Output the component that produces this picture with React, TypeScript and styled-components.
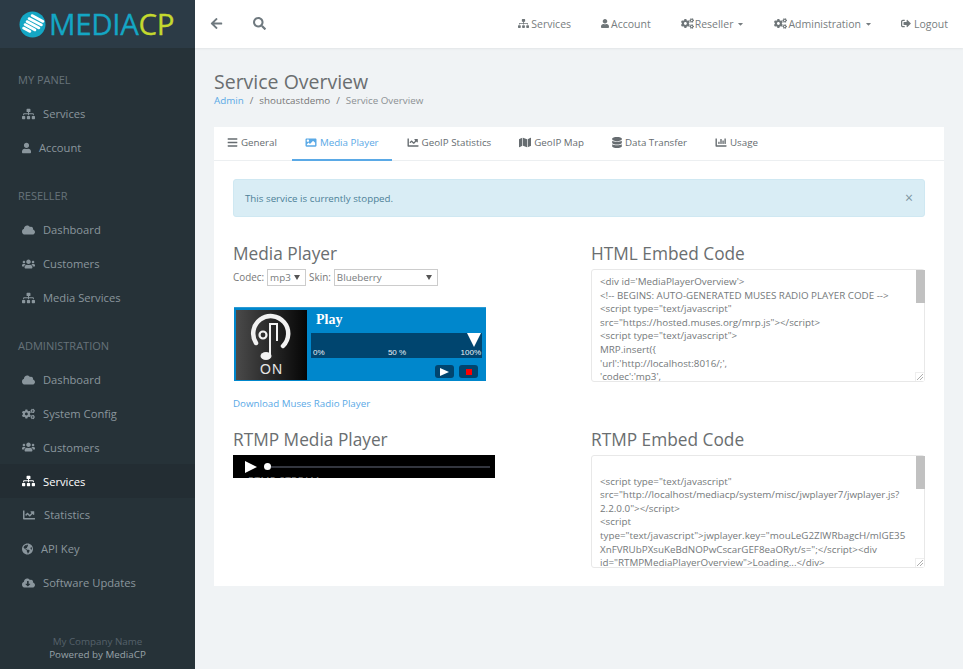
import React from "react";
import styled, { createGlobalStyle } from "styled-components";
import {
  FaSitemap, FaUser, FaCogs, FaSignOutAlt, FaCloud, FaUsers, FaChartLine, FaGlobeAmericas,
  FaCloudDownloadAlt, FaBars, FaImage, FaMap, FaDatabase, FaChartBar, FaArrowLeft, FaSearch, FaCaretDown,
} from "react-icons/fa";

const Global = createGlobalStyle`
  html, body { margin: 0; padding: 0; height: 100%; background: #f0f3f5; overflow: hidden; }
  body { font-family: "Open Sans", "Liberation Sans", sans-serif; font-size: 11px; color: #6a6c6f; }
  * { box-sizing: border-box; }
`;

const Shell = styled.div`display: flex; width: 963px; height: 669px; overflow: hidden;`;
const Sidebar = styled.aside`width: 195px; flex: none; background: #263238; display: flex; flex-direction: column;`;
const Brand = styled.div`height: 48px; background: #2c3b46; display: flex; align-items: center; padding-left: 19px; gap: 3px;`;
const BrandText = styled.span`font-family: "Open Sans", sans-serif; font-size: 29.5px; line-height: 48px; letter-spacing: -0.35px; color: #14a6c4; -webkit-text-stroke: 0.3px currentColor;`;
const BrandAccent = styled.span`color: #c4d92e;`;
const SideNav = styled.nav`display: flex; flex-direction: column; padding-top: 15px; flex: 1;`;
const SideHeading = styled.div<{ $gap: number }>`height: 34px; line-height: 34px; padding-left: 18px; font-size: 11px; color: #66727a; margin-top: ${(p) => p.$gap}px;`;
const SideItem = styled.div<{ $active?: boolean; $iw: number }>`
  height: 33.8px; display: flex; align-items: center; padding-left: 22px; font-size: 11.2px;
  color: ${(p) => (p.$active ? "#ffffff" : "#8a969d")};
  background: ${(p) => (p.$active ? "#232d33" : "transparent")};
  svg { width: ${(p) => p.$iw}px; height: 12px; flex: none; margin-right: 8px; }
`;
const SideFoot = styled.div`text-align: center; font-size: 9.8px; line-height: 13px; color: #55616a; padding: 0 0 8px;`;
const SideFootStrong = styled.div`color: #98a2a8;`;

const Main = styled.div`flex: 1; display: flex; flex-direction: column; min-width: 0;`;
const Topbar = styled.header`height: 48px; flex: none; background: #fff; display: flex; align-items: center; box-shadow: 0 1px 2px rgba(0,0,0,.06); padding: 0 15px 1px 15px;`;
const TopIcon = styled.span`color: #6f797f; width: 13px; height: 13px; display: flex; margin-right: 30px; svg { width: 13px; height: 13px; }`;
const TopSpacer = styled.div`flex: 1;`;
const TopLink = styled.div<{ $gap: number; $iw: number; $im: number }>`
  display: flex; align-items: center; font-size: 10.5px; color: #777d80; margin-left: ${(p) => p.$gap}px;
  > svg { width: ${(p) => p.$iw}px; height: 11px; margin-right: ${(p) => p.$im}px; color: #6f7679; }
`;
const Caret = styled.span`display: flex; margin-left: 4px; svg { width: 7px; height: 8px; }`;

const Content = styled.main`padding: 22px 19px 0 19px; flex: 1;`;
const PageTitle = styled.h1`margin: 0; font-weight: 400; font-size: 19.5px; line-height: 24px; color: #6a6e70;`;
const Crumbs = styled.div`font-size: 9.8px; line-height: 14px; color: #777; display: flex; gap: 6px; margin-bottom: 19px;`;
const CrumbLink = styled.span`color: #5aa9e6;`;
const CrumbFaint = styled.span`color: #8c9194;`;

const Card = styled.section`background: #fff; height: 459px; width: 730px;`;
const Tabs = styled.div`display: flex; height: 34px; border-bottom: 1px solid #eceff1;`;
const Tab = styled.div<{ $active?: boolean; $iw?: number }>`
  height: 34px; display: flex; align-items: center; padding: 0 13px 1px 13px; margin-right: 2px; font-size: 9.75px;
  color: ${(p) => (p.$active ? "#5aa9e6" : "#666c70")};
  border-bottom: 2px solid ${(p) => (p.$active ? "#5aa9e6" : "transparent")};
  svg { width: ${(p) => p.$iw ?? 12}px; height: 11px; margin-right: 3px; }
`;
const Body = styled.div`padding: 18px 19px;`;
const Alert = styled.div`
  height: 38px; background: #d9edf5; border: 1px solid #cfe8f2; border-radius: 3px; color: #4d8198; font-size: 9.75px;
  display: flex; align-items: center; justify-content: space-between; padding: 0 11px;
`;
const Close = styled.span`font-size: 14px; color: #7d949f; line-height: 1;`;
const Grid = styled.div`display: grid; grid-template-columns: 358px 334px; margin-top: 26px;`;
const Column = styled.div`display: flex; flex-direction: column;`;
const SectionTitle = styled.h2`margin: 0; font-weight: 400; font-size: 17.3px; line-height: 22px; color: #6a6e70;`;
const Controls = styled.div`display: flex; align-items: center; gap: 3px; height: 18px; margin-top: 3px; font-size: 9.9px; color: #777;`;
const arrow = "url(\"data:image/svg+xml,%3Csvg xmlns='http://www.w3.org/2000/svg' width='6' height='5'%3E%3Cpath d='M0 0h6L3 5z' fill='%23555'/%3E%3C/svg%3E\")";
const Select = styled.select<{ $w: number }>`
  width: ${(p) => p.$w}px; height: 17px; font: 9.8px "Open Sans", sans-serif; color: #777b7d;
  appearance: none; background: #fff ${arrow} no-repeat right 5px center;
  border: 1px solid #ccc; padding: 0 0 0 2px; border-radius: 0; outline: none;
`;
const Player = styled.div`
  margin: 21px 0 0 1px; width: 252px; height: 74px; background: #0087cc; display: flex; padding: 2px; gap: 3px; border-top: 1px solid #2a9ad4;
`;
const PlayerArt = styled.div`width: 71px; height: 70px; background: linear-gradient(90deg, #4a4a4a, #050505); display: flex; flex-direction: column; align-items: center; flex: none;`;
const PlayerOn = styled.div`font: 14px/14px "Liberation Sans", sans-serif; letter-spacing: 1px; color: #e6e6e6;`;
const PlayerRight = styled.div`flex: 1; display: flex; flex-direction: column; padding-right: 2px; padding-left: 1px;`;
const PlayerLabel = styled.div`font: bold 14px/20px "Liberation Serif", serif; color: #fff; padding-left: 5px; height: 23px;`;
const Meter = styled.div`height: 25px; background: #00456f; position: relative; display: grid; grid-template-columns: 1fr auto 1fr; align-items: end; padding: 0 1px 0 2px; font: 8px/10px "Liberation Sans", sans-serif; color: #eaf2f7;`;
const MeterEnd = styled.span`justify-self: end;`;
const MeterHandle = styled.span`position: absolute; right: 1px; top: 0; width: 0; height: 0; border-left: 7px solid transparent; border-right: 7px solid transparent; border-top: 14px solid #fff;`;
const PlayerButtons = styled.div`display: flex; justify-content: flex-end; gap: 5px; margin-top: 7px; padding-right: 4px;`;
const PlayerButton = styled.div`width: 19px; height: 13px; background: #00456f; border-radius: 3px; display: flex; align-items: center; justify-content: center;`;
const PlayGlyph = styled.span`width: 0; height: 0; border-left: 9px solid #fff; border-top: 4px solid transparent; border-bottom: 4px solid transparent;`;
const StopGlyph = styled.span`width: 6px; height: 6px; background: #f00;`;
const Download = styled.div`color: #5aa9e6; font-size: 9.75px; line-height: 14px; margin-top: 16px;`;
const Rtmp = styled.div`margin-top: 4px; width: 262px; height: 23px; background: #000; display: flex; align-items: center; padding-left: 12px; position: relative; overflow: hidden;`;
const RtmpPlay = styled.span`width: 0; height: 0; border-left: 12px solid #fff; border-top: 6px solid transparent; border-bottom: 6px solid transparent; margin-right: 7px;`;
const RtmpDot = styled.span`width: 7px; height: 7px; border-radius: 50%; background: #fff; flex: none;`;
const RtmpTrack = styled.span`width: 219px; height: 2px; background: #33363f;`;
const RtmpClip = styled.span`position: absolute; left: 15px; top: 19px; font-size: 10px; letter-spacing: 0.4px; color: #777;`;
const CodeBox = styled.div`position: relative; width: 334px; height: 113px; margin-top: 4px;`;
const Code = styled.textarea`
  display: block; width: 334px; height: 113px; padding: 5px 9px 0 8px; border: 1px solid #e8e8e8; border-radius: 3px;
  font: 9.8px/13.6px "Open Sans", sans-serif; color: #75797b; background: #fff; resize: none; overflow: hidden; outline: none;
  white-space: pre;
`;
const ScrollThumb = styled.span`position: absolute; right: 0; top: 1px; width: 9px; height: 33px; background: #c1c1c1;`;
const Grip = styled.svg`position: absolute; right: 1px; bottom: 1px; width: 9px; height: 9px; background: #fff; border-left: 1px solid #eee; border-top: 1px solid #eee;`;
const RightBlock = styled.div<{ $mt: number }>`margin-top: ${(p) => p.$mt}px;`;
const LeftBlock = styled.div`margin-top: 18px;`;

const Logo = () => (
  <svg width="27" height="27" viewBox="0 0 27 27">
    <circle cx="13.5" cy="13.5" r="13" fill="#14a6c4" />
    <g stroke="#fff" strokeWidth="2.6" strokeLinecap="round">
      <path d="M13 4.5 L24 10.5" /><path d="M10 7.5 L22.5 14" /><path d="M8 10.5 L20 17" /><path d="M6 13.5 L16 19" /><path d="M4.5 17 L11 20.5" />
    </g>
  </svg>
);

const MusicIcon = () => (
  <svg width="71" height="52" viewBox="0 0 71 52">
    <path d="M20 33 A17.5 17.5 0 1 1 47 36" fill="none" stroke="#f2f2f2" strokeWidth="4.5" strokeLinecap="round" />
    <path d="M34 14 L34 47 M33 14 L41 14 L41 31" fill="none" stroke="#f2f2f2" strokeWidth="2" />
    <ellipse cx="30" cy="46" rx="5.5" ry="4" fill="#f2f2f2" />
    <circle cx="27" cy="25" r="3.5" fill="none" stroke="#f2f2f2" strokeWidth="2.2" />
  </svg>
);

const GripLines = () => (
  <Grip viewBox="0 0 8 8">
    <path d="M1 7 L7 1 M4 7 L7 4" stroke="#999" strokeWidth="0.8" fill="none" />
  </Grip>
);

type SideRow = { h?: string; gap?: number; t?: string; i?: React.ReactNode; w?: number; a?: boolean };
const side: SideRow[] = [
  { h: "MY PANEL", gap: 0 },
  { t: "Services", i: <FaSitemap />, w: 13 },
  { t: "Account", i: <FaUser />, w: 9 },
  { h: "RESELLER", gap: 14.5 },
  { t: "Dashboard", i: <FaCloud />, w: 13 },
  { t: "Customers", i: <FaUsers />, w: 13 },
  { t: "Media Services", i: <FaSitemap />, w: 13 },
  { h: "ADMINISTRATION", gap: 14.4 },
  { t: "Dashboard", i: <FaCloud />, w: 13 },
  { t: "System Config", i: <FaCogs />, w: 13 },
  { t: "Customers", i: <FaUsers />, w: 13 },
  { t: "Services", i: <FaSitemap />, w: 13, a: true },
  { t: "Statistics", i: <FaChartLine />, w: 14 },
  { t: "API Key", i: <FaGlobeAmericas />, w: 11 },
  { t: "Software Updates", i: <FaCloudDownloadAlt />, w: 13 },
];

const html = `<div id='MediaPlayerOverview'>
<!-- BEGINS: AUTO-GENERATED MUSES RADIO PLAYER CODE -->
<script type="text/javascript"
src="https://hosted.muses.org/mrp.js"></script>
<script type="text/javascript">
MRP.insert({
'url':'http://localhost:8016/;',
'codec':'mp3',
'volume':100,`;
const rtmp = `
<script type="text/javascript"
src="http://localhost/mediacp/system/misc/jwplayer7/jwplayer.js?
2.2.0.0"></script>
<script
type="text/javascript">jwplayer.key="mouLeG2ZIWRbagcH/mIGE35
XnFVRUbPXsuKeBdNOPwCscarGEF8eaORyt/s=";</script><div
id="RTMPMediaPlayerOverview">Loading...</div>`;

export default function App() {
  return (
    <>
      <Global />
      <Shell>
        <Sidebar>
          <Brand>
            <Logo />
            <BrandText>MEDIA<BrandAccent>CP</BrandAccent></BrandText>
          </Brand>
          <SideNav>
            {side.map((s, n) =>
              s.h ? (
                <SideHeading key={n} $gap={s.gap ?? 0}>{s.h}</SideHeading>
              ) : (
                <SideItem key={n} $active={s.a} $iw={s.w ?? 13}>{s.i}{s.t}</SideItem>
              )
            )}
          </SideNav>
          <SideFoot>
            My Company Name
            <SideFootStrong>Powered by MediaCP</SideFootStrong>
          </SideFoot>
        </Sidebar>
        <Main>
          <Topbar>
            <TopIcon><FaArrowLeft /></TopIcon>
            <TopIcon><FaSearch /></TopIcon>
            <TopSpacer />
            <TopLink $gap={0} $iw={11} $im={2}><FaSitemap />Services</TopLink>
            <TopLink $gap={30} $iw={8} $im={2}><FaUser />Account</TopLink>
            <TopLink $gap={30} $iw={13} $im={1}><FaCogs />Reseller<Caret><FaCaretDown /></Caret></TopLink>
            <TopLink $gap={30} $iw={13} $im={1}><FaCogs />Administration<Caret><FaCaretDown /></Caret></TopLink>
            <TopLink $gap={29} $iw={10} $im={3}><FaSignOutAlt />Logout</TopLink>
          </Topbar>
          <Content>
            <PageTitle>Service Overview</PageTitle>
            <Crumbs>
              <CrumbLink>Admin</CrumbLink><span>/</span><span>shoutcastdemo</span><span>/</span><CrumbFaint>Service Overview</CrumbFaint>
            </Crumbs>
            <Card>
              <Tabs>
                <Tab $iw={11}><FaBars />General</Tab>
                <Tab $active><FaImage />Media Player</Tab>
                <Tab><FaChartLine />GeoIP Statistics</Tab>
                <Tab><FaMap />GeoIP Map</Tab>
                <Tab $iw={10}><FaDatabase />Data Transfer</Tab>
                <Tab><FaChartBar />Usage</Tab>
              </Tabs>
              <Body>
                <Alert>This service is currently stopped.<Close>×</Close></Alert>
                <Grid>
                  <Column>
                    <SectionTitle>Media Player</SectionTitle>
                    <Controls>
                      Codec:
                      <Select $w={39} defaultValue="mp3"><option>mp3</option></Select>
                      Skin:
                      <Select $w={104} defaultValue="Blueberry"><option>Blueberry</option></Select>
                    </Controls>
                    <Player>
                      <PlayerArt>
                        <MusicIcon />
                        <PlayerOn>ON</PlayerOn>
                      </PlayerArt>
                      <PlayerRight>
                        <PlayerLabel>Play</PlayerLabel>
                        <Meter>
                          <MeterHandle />
                          <span>0%</span><span>50 %</span><MeterEnd>100%</MeterEnd>
                        </Meter>
                        <PlayerButtons>
                          <PlayerButton><PlayGlyph /></PlayerButton>
                          <PlayerButton><StopGlyph /></PlayerButton>
                        </PlayerButtons>
                      </PlayerRight>
                    </Player>
                    <Download>Download Muses Radio Player</Download>
                    <LeftBlock>
                      <SectionTitle>RTMP Media Player</SectionTitle>
                      <Rtmp>
                        <RtmpPlay /><RtmpDot /><RtmpTrack />
                        <RtmpClip>RTMP STREAM</RtmpClip>
                      </Rtmp>
                    </LeftBlock>
                  </Column>
                  <Column>
                    <SectionTitle>HTML Embed Code</SectionTitle>
                    <CodeBox>
                      <Code readOnly wrap="off" defaultValue={html} />
                      <ScrollThumb />
                      <GripLines />
                    </CodeBox>
                    <RightBlock $mt={47}>
                      <SectionTitle>RTMP Embed Code</SectionTitle>
                      <CodeBox>
                        <Code readOnly wrap="off" defaultValue={rtmp} />
                        <ScrollThumb />
                        <GripLines />
                      </CodeBox>
                    </RightBlock>
                  </Column>
                </Grid>
              </Body>
            </Card>
          </Content>
        </Main>
      </Shell>
    </>
  );
}
